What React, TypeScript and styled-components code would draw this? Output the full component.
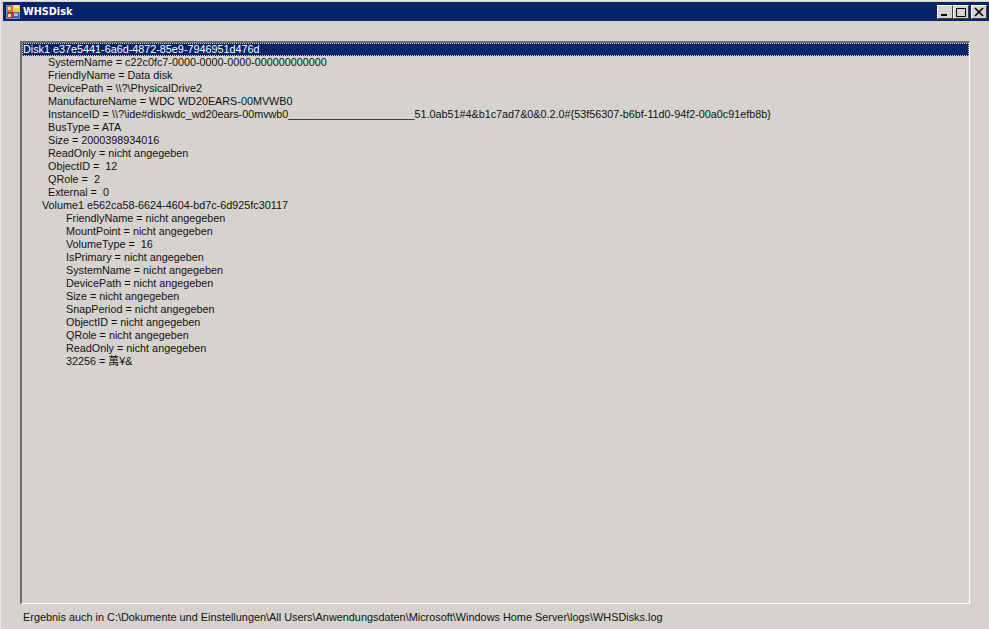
import styled, { createGlobalStyle } from "styled-components";

const GlobalStyle = createGlobalStyle`
  html, body {
    margin: 0;
    padding: 0;
    background: #d6d3ce;
  }
  body {
    font-family: "Liberation Sans", Arial, "Noto Sans CJK SC", sans-serif;
  }
`;

const Window = styled.div`
  width: 989px;
  height: 629px;
  box-sizing: border-box;
  padding: 1px 0 0 2px;
  background: #d6d3ce;
  border-left: 1px solid #e8e6e2;
  border-top: 1px solid #e8e6e2;
  overflow: hidden;
  display: flex;
  flex-direction: column;
`;

const TitleBar = styled.div`
  height: 19px;
  padding: 0 2px 0 3px;
  background: #0a246a;
  display: flex;
  align-items: center;
  gap: 3px;
`;

const TitleText = styled.span`
  flex: 1;
  color: #fff;
  font-size: 9.7px;
  font-weight: bold;
  font-family: "DejaVu Sans", sans-serif;
`;

const Controls = styled.div`
  display: flex;
  align-items: center;
`;

const ControlButton = styled.div<{ $gap?: number }>`
  width: 16px;
  height: 14px;
  margin-left: ${(p) => p.$gap ?? 0}px;
  box-sizing: border-box;
  background: #d6d3ce;
  border-top: 1px solid #fff;
  border-left: 1px solid #fff;
  border-right: 1px solid #404040;
  border-bottom: 1px solid #404040;
  display: flex;
  align-items: center;
  justify-content: center;
`;

const Content = styled.div`
  flex: 1;
  padding: 20px 0 0 17px;
  display: flex;
  flex-direction: column;
`;

const TreeBox = styled.div`
  width: 950px;
  height: 563px;
  box-sizing: border-box;
  border-top: 2px solid #6f6c66;
  border-left: 2px solid #6f6c66;
  border-right: 1px solid #fff;
  border-bottom: 1px solid #fff;
`;

const Row = styled.div<{ $indent: number; $selected?: boolean }>`
  height: 13px;
  line-height: 13px;
  font-size: 10.8px;
  color: ${(p) => (p.$selected ? "#fff" : "#111")};
  background: ${(p) => (p.$selected ? "#0a246a" : "transparent")};
  outline: ${(p) => (p.$selected ? "1px dotted #d6d3ce" : "none")};
  outline-offset: -1px;
  padding-left: ${(p) => p.$indent}px;
  white-space: pre;
`;

const Status = styled.div`
  margin-top: 6px;
  padding-left: 3px;
  font-size: 10.88px;
  line-height: 14px;
  color: #111;
  white-space: pre;
`;

const rows: [number, string][] = [
  [26, "SystemName = c22c0fc7-0000-0000-0000-000000000000"],
  [26, "FriendlyName = Data disk"],
  [26, "DevicePath = \\\\?\\PhysicalDrive2"],
  [26, "ManufactureName = WDC WD20EARS-00MVWB0"],
  [26, "InstanceID = \\\\?\\ide#diskwdc_wd20ears-00mvwb0_____________________51.0ab51#4&b1c7ad7&0&0.2.0#{53f56307-b6bf-11d0-94f2-00a0c91efb8b}"],
  [26, "BusType = ATA"],
  [26, "Size = 2000398934016"],
  [26, "ReadOnly = nicht angegeben"],
  [26, "ObjectID =  12"],
  [26, "QRole =  2"],
  [26, "External =  0"],
  [20, "Volume1 e562ca58-6624-4604-bd7c-6d925fc30117"],
  [44, "FriendlyName = nicht angegeben"],
  [44, "MountPoint = nicht angegeben"],
  [44, "VolumeType =  16"],
  [44, "IsPrimary = nicht angegeben"],
  [44, "SystemName = nicht angegeben"],
  [44, "DevicePath = nicht angegeben"],
  [44, "Size = nicht angegeben"],
  [44, "SnapPeriod = nicht angegeben"],
  [44, "ObjectID = nicht angegeben"],
  [44, "QRole = nicht angegeben"],
  [44, "ReadOnly = nicht angegeben"],
  [44, "32256 = 萬¥&"],
];

function AppIcon() {
  return (
    <svg width="14" height="14" viewBox="0 0 14 14">
      <rect x="0" y="0" width="14" height="14" fill="#6f8fd0" />
      <rect x="1" y="1" width="6" height="6" fill="#e07030" />
      <rect x="2" y="2" width="3" height="3" fill="#f0d8a0" />
      <rect x="7" y="0" width="7" height="7" fill="#f4d040" />
      <rect x="8" y="1" width="5" height="2" fill="#f8e890" />
      <rect x="1" y="7" width="6" height="6" fill="#c83020" />
      <rect x="2" y="9" width="3" height="3" fill="#e8e0d0" />
      <rect x="7" y="7" width="6" height="6" fill="#3060c0" />
      <rect x="8" y="8" width="4" height="3" fill="#a0b8e8" />
    </svg>
  );
}

export default function App() {
  return (
    <>
      <GlobalStyle />
      <Window>
        <TitleBar>
          <AppIcon />
          <TitleText>WHSDisk</TitleText>
          <Controls>
            <ControlButton>
              <svg width="10" height="10" viewBox="0 0 10 10">
                <rect x="1" y="7" width="6" height="2" fill="#000" />
              </svg>
            </ControlButton>
            <ControlButton>
              <svg width="10" height="10" viewBox="0 0 10 10">
                <path d="M0.5 1.5H9.5V9.5H0.5Z M0 1.5H10" fill="none" stroke="#000" />
              </svg>
            </ControlButton>
            <ControlButton $gap={2}>
              <svg width="10" height="10" viewBox="0 0 10 10">
                <path d="M1 1L9 9M9 1L1 9" stroke="#000" strokeWidth="1.6" />
              </svg>
            </ControlButton>
          </Controls>
        </TitleBar>
        <Content>
          <TreeBox>
            <Row $indent={1} $selected>Disk1 e37e5441-6a6d-4872-85e9-7946951d476d</Row>
            {rows.map(([indent, text], i) => (
              <Row key={i} $indent={indent}>{text}</Row>
            ))}
          </TreeBox>
          <Status>Ergebnis auch in C:\Dokumente und Einstellungen\All Users\Anwendungsdaten\Microsoft\Windows Home Server\logs\WHSDisks.log</Status>
        </Content>
      </Window>
    </>
  );
}
